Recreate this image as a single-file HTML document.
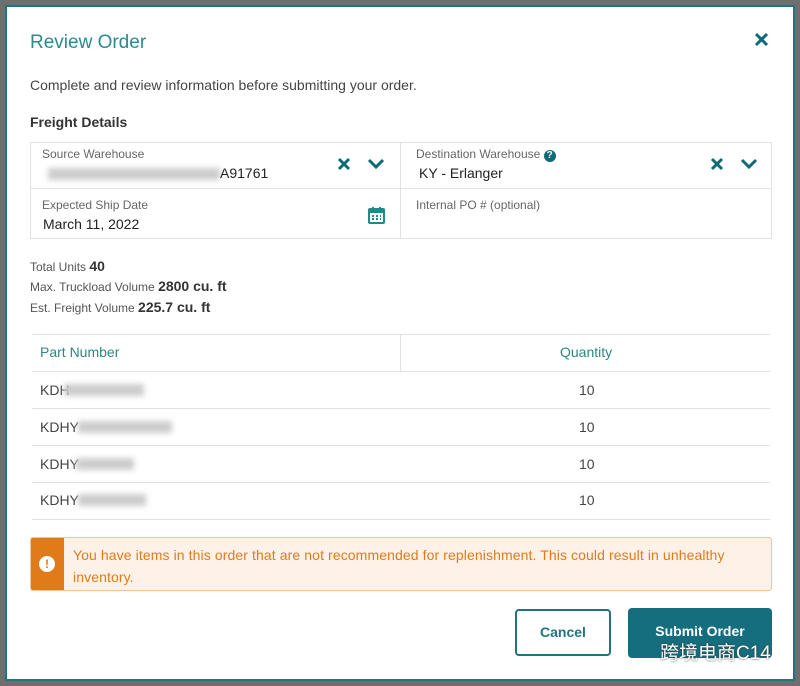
<!DOCTYPE html><html><head><style>
*{margin:0;padding:0;box-sizing:border-box}
body{width:800px;height:686px;background:#6e6e6e;font-family:"Liberation Sans","Noto Sans CJK SC",sans-serif;position:relative;overflow:hidden;color:#333}
.modal{position:absolute;left:5px;top:5px;width:790px;height:676px;background:#fff;border:2px solid #1f7480}
.a{position:absolute}
.blur{position:absolute;background:#ccc;filter:blur(3px);height:12px}
.lbl{font-size:12px;color:#666}
.val{font-size:14px;color:#222}
.line{position:absolute;height:1px;background:#dfe3e6}
</style></head><body>
<div class="modal"></div>
<div class="a" style="left:30px;top:32px;font-size:19px;color:#2a8a8f">Review Order</div>
<svg class="a" style="left:754px;top:32px" width="15" height="15"><path d="M2 2L13 13M13 2L2 13" stroke="#0f6a78" stroke-width="3"/></svg>
<div class="a" style="left:30px;top:77px;font-size:14px;color:#444">Complete and review information before submitting your order.</div>
<div class="a" style="left:30px;top:114px;font-size:14px;font-weight:bold;color:#333">Freight Details</div>
<div class="a" style="left:30px;top:142px;width:742px;height:97px;border:1px solid #dfe3e6"></div>
<div class="a" style="left:400px;top:142px;width:1px;height:97px;background:#dfe3e6"></div>
<div class="line" style="left:30px;top:188px;width:742px"></div>
<div class="a lbl" style="left:42px;top:147px">Source Warehouse</div>
<div class="blur" style="left:48px;top:168px;width:172px"></div>
<div class="a val" style="left:220px;top:165px">A91761</div>
<div class="a lbl" style="left:416px;top:147px">Destination Warehouse <span style="display:inline-block;width:12px;height:12px;border-radius:50%;background:#0f6a78;color:#fff;font-size:10px;text-align:center;line-height:12px;font-weight:bold">?</span></div>
<div class="a val" style="left:419px;top:165px">KY - Erlanger</div>
<svg class="a" style="left:337px;top:157px" width="14" height="14"><path d="M2 2L12 12M12 2L2 12" stroke="#0f6a78" stroke-width="3"/></svg>
<svg class="a" style="left:367px;top:158px" width="18" height="12"><path d="M2 2L9 9L16 2" stroke="#0f6a78" stroke-width="3" fill="none"/></svg>
<svg class="a" style="left:710px;top:157px" width="14" height="14"><path d="M2 2L12 12M12 2L2 12" stroke="#0f6a78" stroke-width="3"/></svg>
<svg class="a" style="left:740px;top:158px" width="18" height="12"><path d="M2 2L9 9L16 2" stroke="#0f6a78" stroke-width="3" fill="none"/></svg>
<div class="a lbl" style="left:42px;top:198px">Expected Ship Date</div>
<div class="a val" style="left:43px;top:216px">March 11, 2022</div>
<svg class="a" style="left:368px;top:206px" width="17" height="18"><rect x="1" y="3" width="15" height="14" rx="1" fill="none" stroke="#1f8a8a" stroke-width="2"/><rect x="1" y="3" width="15" height="4" fill="#1f8a8a"/><path d="M5 1v4M12 1v4" stroke="#1f8a8a" stroke-width="2"/><path d="M4 10h2M8 10h2M12 10h1M4 13h2M8 13h2M12 13h1" stroke="#1f8a8a" stroke-width="2"/></svg>
<div class="a lbl" style="left:416px;top:198px">Internal PO # (optional)</div>
<div class="a" style="left:30px;top:258px;font-size:12px;color:#555">Total Units <b style="font-size:14px;color:#333">40</b></div>
<div class="a" style="left:30px;top:278px;font-size:12px;color:#555">Max. Truckload Volume <b style="font-size:14px;color:#333">2800 cu. ft</b></div>
<div class="a" style="left:30px;top:299px;font-size:12px;color:#555">Est. Freight Volume <b style="font-size:14px;color:#333">225.7 cu. ft</b></div>
<div class="line" style="left:32px;top:334px;width:738px"></div>
<div class="a" style="left:400px;top:334px;width:1px;height:37px;background:#dfe3e6"></div>
<div class="a" style="left:40px;top:344px;font-size:14px;color:#2a8a7f">Part Number</div>
<div class="a" style="left:560px;top:344px;font-size:14px;color:#2a8a7f">Quantity</div>
<div class="line" style="left:32px;top:371px;width:738px"></div>
<div class="line" style="left:32px;top:408px;width:738px"></div>
<div class="line" style="left:32px;top:445px;width:738px"></div>
<div class="line" style="left:32px;top:482px;width:738px"></div>
<div class="line" style="left:32px;top:519px;width:738px"></div>
<div class="a val" style="left:40px;top:382px;color:#444">KDH</div><div class="blur" style="left:64px;top:384px;width:80px"></div>
<div class="a val" style="left:40px;top:419px;color:#444">KDHY</div><div class="blur" style="left:78px;top:421px;width:94px"></div>
<div class="a val" style="left:40px;top:456px;color:#444">KDHY</div><div class="blur" style="left:76px;top:458px;width:58px"></div>
<div class="a val" style="left:40px;top:492px;color:#444">KDHY</div><div class="blur" style="left:78px;top:494px;width:68px"></div>
<div class="a val" style="left:579px;top:382px;color:#444">10</div>
<div class="a val" style="left:579px;top:419px;color:#444">10</div>
<div class="a val" style="left:579px;top:456px;color:#444">10</div>
<div class="a val" style="left:579px;top:492px;color:#444">10</div>
<div class="a" style="left:30px;top:537px;width:742px;height:54px;border:1px solid #f0c49a;background:#fdf1e8;border-radius:3px;overflow:hidden">
<div style="position:absolute;left:0;top:0;width:33px;height:54px;background:#e07b1a"></div>
<div style="position:absolute;left:8px;top:18px;width:16px;height:16px;border-radius:50%;background:#fff;color:#e07b1a;font-size:12px;font-weight:bold;text-align:center;line-height:16px">!</div>
<div style="position:absolute;left:42px;top:6px;width:692px;font-size:14px;line-height:22px;color:#e07b1a;letter-spacing:0.1px">You have items in this order that are not recommended for replenishment. This could result in unhealthy inventory.</div>
</div>
<div class="a" style="left:515px;top:609px;width:96px;height:47px;border:2px solid #1f7480;border-radius:4px;color:#1f7480;font-size:14px;font-weight:bold;text-align:center;line-height:43px">Cancel</div>
<div class="a" style="left:628px;top:608px;width:144px;height:50px;background:#156e7e;border-radius:4px;color:#fff;font-size:14px;font-weight:bold;text-align:center;padding-top:15px">Submit Order</div>
<div class="a" style="left:660px;top:638px;font-size:19px;color:#fff;text-shadow:0 0 2px #333">跨境电商C14</div>
</body></html>
